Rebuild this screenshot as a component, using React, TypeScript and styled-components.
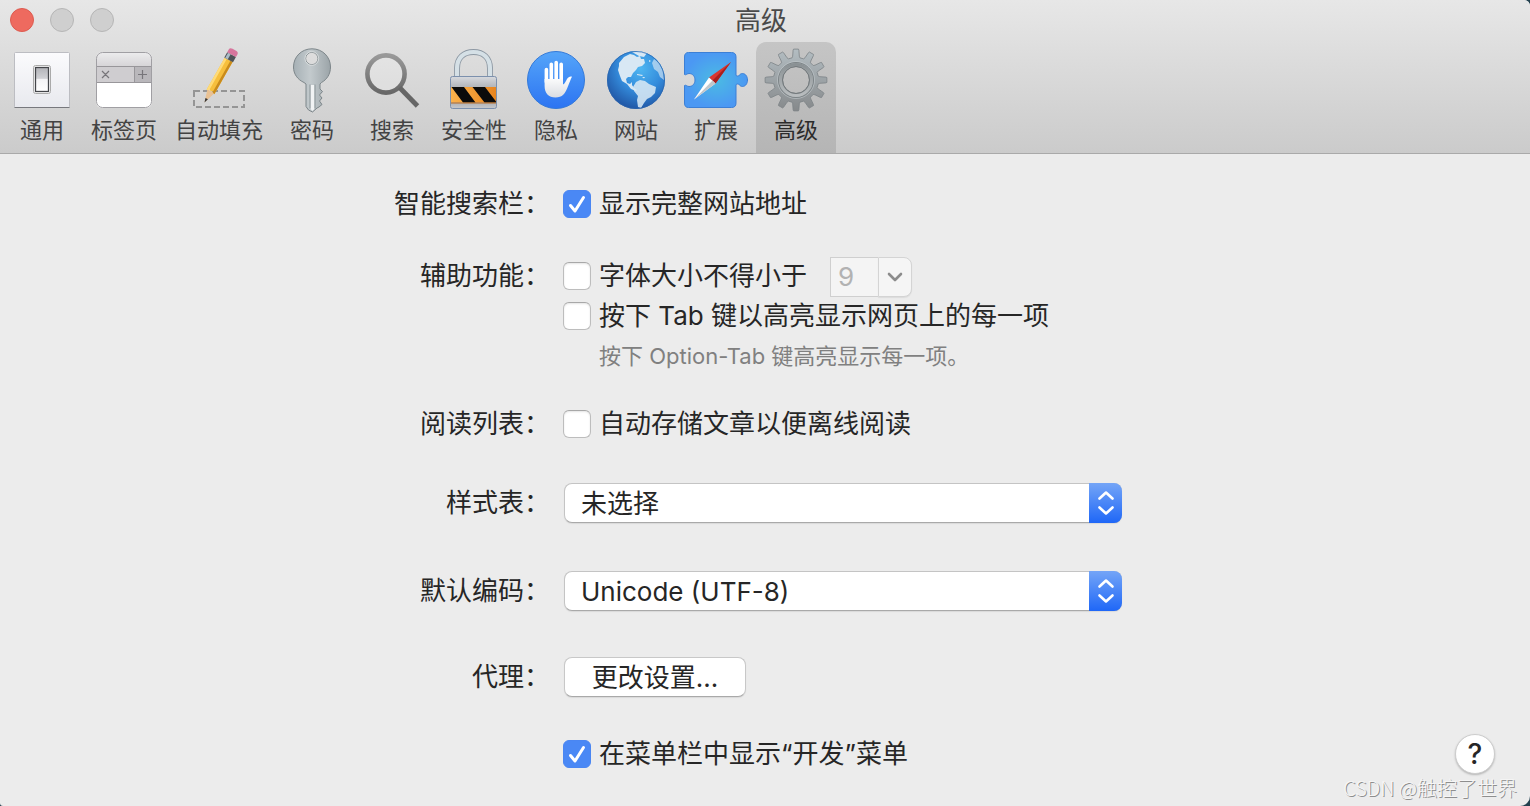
import React from "react";
import styled, { createGlobalStyle } from "styled-components";

const GlobalStyle = createGlobalStyle`
  *, *::before, *::after { box-sizing: border-box; }
  body {
    margin: 0;
    background: #23414f;
    font-family: Inter, "Noto Sans CJK SC", sans-serif;
    font-size: 26px;
    line-height: 40px;
    color: #262626;
  }
  button, input, select { font: inherit; color: inherit; margin: 0; }
`;

const Window = styled.div`
  position: relative;
  display: flex;
  flex-direction: column;
  min-height: 100vh;
  background: #ececec;
  border-radius: 0 6px 10px 3px;
  overflow: hidden;
`;

const Header = styled.header`
  background: linear-gradient(#e7e7e7, #cbcbcb);
  border-bottom: 1px solid #a9a9a9;
`;

const TitleBar = styled.div`
  display: grid;
  grid-template-columns: 124px 1fr 132px;
  align-items: center;
  height: 42px;
`;

const Lights = styled.div`
  display: flex;
  gap: 16px;
  padding: 0 0 2px 10px;
`;

const Light = styled.button<{ $close?: boolean }>`
  width: 24px;
  height: 24px;
  padding: 0;
  border-radius: 50%;
  border: 1px solid ${(p) => (p.$close ? "#dd5b50" : "#b6b6b6")};
  background: ${(p) => (p.$close ? "#ee6a5f" : "#cfcfcf")};
`;

const Title = styled.h1`
  margin: 0;
  font-size: 26px;
  font-weight: 400;
  line-height: 42px;
  text-align: center;
  color: #4a4a4a;
`;

const Toolbar = styled.nav`
  display: flex;
  padding-left: 2px;
`;

const Tab = styled.button<{ $active?: boolean }>`
  display: flex;
  flex-direction: column;
  align-items: center;
  min-width: 80px;
  height: 111px;
  padding: 6px 9px 0;
  border: 0;
  border-radius: 10px 10px 0 0;
  background: ${(p) => (p.$active ? "linear-gradient(#c5c5c5, #b5b5b5)" : "none")};
  color: ${(p) => (p.$active ? "#2b2b2b" : "#434343")};
  font-size: 22px;
  line-height: 32px;
  white-space: nowrap;

  svg { display: block; margin: 0 -4px 2px; overflow: visible; }
`;

const Main = styled.main`
  display: grid;
  grid-template-columns: 61px 1fr 75px;
  padding: 30px 0 32px;
`;

const Form = styled.form`
  grid-column: 2;
  display: grid;
  grid-template-columns: auto 559px;
  column-gap: 13px;
  justify-content: center;
`;

const Label = styled.div<{ $space?: number }>`
  grid-column: 1;
  margin-top: ${(p) => p.$space ?? 0}px;
  text-align: right;
  white-space: nowrap;
`;

const Field = styled.div<{ $space?: number }>`
  grid-column: 2;
  margin-top: ${(p) => p.$space ?? 0}px;
`;

const Line = styled.div`
  display: flex;
  align-items: center;
  height: 40px;
`;

const CheckLabel = styled.label`
  display: flex;
  align-items: center;
  gap: 8px;
  white-space: nowrap;
`;

const CheckBoxFrame = styled.span`
  display: grid;
  width: 28px;
  height: 28px;

  > * { grid-area: 1 / 1; }
  > svg { pointer-events: none; visibility: hidden; }
  > input:checked + svg { visibility: visible; }
`;

const CheckInput = styled.input`
  appearance: none;
  width: 28px;
  height: 28px;
  border: 1px solid #bdbdbd;
  border-top-color: #a8a8a8;
  border-radius: 6px;
  background: #fff;
  box-shadow: inset 0 1px 2px #e4e4e4;

  &:checked {
    border-color: #4a86f2;
    background: #4a88f5;
    box-shadow: none;
  }
`;

const Hint = styled.p`
  margin: 0;
  padding-left: 36px;
  font-size: 22px;
  line-height: 40px;
  color: #808080;
`;

const Combo = styled.div`
  display: flex;
  height: 40px;
  margin: 2px 0 0 23px;
`;

const ComboInput = styled.input`
  width: 48px;
  padding: 0 0 0 7px;
  border: 1px solid #cfcfcf;
  border-right: 0;
  background: #f4f4f4;
  color: #b2b2b2;
`;

const ComboButton = styled.button`
  display: flex;
  align-items: center;
  justify-content: center;
  width: 34px;
  padding: 0;
  border: 1px solid #d4d4d4;
  border-radius: 0 8px 8px 0;
  background: #f5f5f5;
  box-shadow: 0 1px 1px #dcdcdc;
`;

const SelectFrame = styled.div`
  display: grid;
  height: 40px;
  margin-left: 1px;

  > * { grid-area: 1 / 1; }
`;

const Select = styled.select`
  appearance: none;
  width: 100%;
  height: 40px;
  padding: 0 44px 2px 16px;
  border: 1px solid #c4c4c4;
  border-bottom-color: #a9a9a9;
  border-radius: 8px;
  background: #fff;
  box-shadow: 0 1px 1px #dadada;
`;

const SelectCap = styled.span`
  display: flex;
  align-items: center;
  justify-content: center;
  justify-self: end;
  width: 33px;
  height: 40px;
  border-radius: 0 8px 8px 0;
  background: linear-gradient(#74a5f7, #1f67f7);
  pointer-events: none;
`;

const PushButton = styled.button`
  display: block;
  width: 182px;
  height: 40px;
  margin-left: 1px;
  padding: 0 0 2px;
  border: 1px solid #c8c8c8;
  border-bottom-color: #a9a9a9;
  border-radius: 8px;
  background: #fff;
  box-shadow: 0 1px 1px #dadada;
`;

const HelpButton = styled.button`
  grid-column: 3;
  align-self: end;
  width: 40px;
  height: 40px;
  padding: 0;
  border: 1px solid #cdcdcd;
  border-radius: 50%;
  background: #fff;
  box-shadow: 0 1px 2px #b5b5b5;
  font-size: 28px;
  font-weight: 500;
  line-height: 36px;
`;

const Watermark = styled.div`
  position: absolute;
  right: 13px;
  bottom: 4px;
  font-family: "Noto Sans CJK SC", sans-serif;
  font-size: 20px;
  font-weight: 300;
  line-height: 28px;
  color: #f6f6f6;
  text-shadow: 1px 1px 0 #8e8e8e;
`;

const GeneralIcon = () => (
  <svg width="64" height="64" viewBox="0 0 64 64" aria-hidden="true">
    <defs>
      <linearGradient id="plate" x2="0" y2="1"><stop stopColor="#fbfbfd" /><stop offset="1" stopColor="#e8e9ee" /></linearGradient>
      <linearGradient id="rocker" x2="0" y2="1"><stop stopColor="#b2b3b8" /><stop offset=".45" stopColor="#d0d1d5" /><stop offset=".5" stopColor="#f4f4f6" /><stop offset="1" stopColor="#fff" /></linearGradient>
    </defs>
    <rect x="4.500" y="4.500" width="55" height="55" rx="1" fill="url(#plate)" stroke="#bcbdc2" />
    <path d="M4.500 59.500h55" stroke="#77787d" />
    <rect x="23.500" y="17.500" width="17" height="28" rx="2" fill="#fff" stroke="#aaa" />
    <rect x="25.500" y="19.500" width="13" height="24" fill="url(#rocker)" stroke="#44464a" strokeWidth="1.300" />
  </svg>
);

const TabsIcon = () => (
  <svg width="64" height="64" viewBox="0 0 64 64" aria-hidden="true">
    <defs>
      <linearGradient id="tabTop" x2="0" y2="1"><stop stopColor="#ededee" /><stop offset="1" stopColor="#d5d3d6" /></linearGradient>
      <clipPath id="tabClip"><rect x="4" y="4" width="56" height="56" rx="6" /></clipPath>
    </defs>
    <g clipPath="url(#tabClip)">
      <path fill="#fff" d="M4 4h56v56H4z" />
      <path fill="url(#tabTop)" d="M4 4h56v15H4z" />
      <path fill="#cfcdd0" d="M4 18h56v17H4z" />
      <path fill="#b9b7bb" d="M42 18h18v17H42z" />
      <path d="M4 18.500h56M4 34.500h56M42.500 18v17" stroke="#98969a" />
    </g>
    <rect x="4.500" y="4.500" width="55" height="55" rx="6" fill="none" stroke="#a09fa3" />
    <path d="M10 23l7 7m0-7l-7 7M46 26.500h9M50.500 22v9" stroke="#77757a" strokeWidth="1.200" fill="none" />
  </svg>
);

const PencilIcon = () => (
  <svg width="64" height="64" viewBox="0 0 64 64" aria-hidden="true">
    <path d="M7 43h50v16H7z" fill="none" stroke="#959595" strokeWidth="2" strokeDasharray="6 3" />
    <g transform="translate(17.500 54.500) rotate(29.500)">
      <path d="M0 0L-4-13h8z" fill="#e9c193" />
      <path d="M0 0l-1.400-4.500h2.800z" fill="#333" />
      <path d="M-4.500-12l2-2 2.500 1 2.500-1 2 2V-49h-9z" fill="#f6bf3d" />
      <path d="M-4.500-12V-49h2.500v36z" fill="#ffdb78" />
      <path d="M4.500-12V-49H2v36z" fill="#c98b1c" />
      <path d="M-5-55H5v6H-5z" fill="#4e5358" />
      <path d="M-4-55h3v6h-3z" fill="#a9bcc7" />
      <path d="M-5-55v-3q0-2.500 3-2.500h4q3 0 3 2.500v3z" fill="#d7759d" />
    </g>
  </svg>
);

const KeyIcon = () => (
  <svg width="64" height="64" viewBox="0 0 64 64" aria-hidden="true">
    <defs><linearGradient id="keyMetal"><stop stopColor="#a6b0b5" /><stop offset=".45" stopColor="#c3cacd" /><stop offset="1" stopColor="#9ba4a8" /></linearGradient></defs>
    <path fillRule="evenodd" d="M32 .800c10.500 0 18.500 8 18.500 18.200 0 7-3.500 12.500-9 15.500l-1.500 1.500V41l2.500 2.500-3 3.500 2.500 3-2.500 3 2.500 3.500-3 2.500-2 1-4.500 4-4-2-2.500-3.500V36l-2-1.500C17.500 31.500 13.500 26 13.500 19 13.500 8.800 21.500.800 32 .800zM38 10.500a6.200 6.200 0 1 0-12.400 0 6.200 6.200 0 0 0 12.400 0z" fill="url(#keyMetal)" stroke="#7d868a" />
    <circle cx="31.800" cy="10.500" r="6.800" fill="none" stroke="#e4e8e9" strokeWidth=".8" />
    <path d="M30.500 37h4V61l-2 2-2-2z" fill="#f1f3f4" />
    <path d="M30 36.500v24" stroke="#8b9498" />
    <path d="M35 36.500v24" stroke="#8b9498" />
  </svg>
);

const SearchIcon = () => (
  <svg width="64" height="64" viewBox="0 0 64 64" aria-hidden="true">
    <defs><linearGradient id="lens" x2="0" y2="1"><stop stopColor="#999" /><stop offset="1" stopColor="#686868" /></linearGradient></defs>
    <circle cx="26" cy="26" r="18.600" fill="#fff" fillOpacity=".2" stroke="url(#lens)" strokeWidth="4.600" />
    <path d="M39.500 39.500L57.500 58" stroke="#666" strokeWidth="4.800" />
  </svg>
);

const LockIcon = () => (
  <svg width="64" height="64" viewBox="0 0 64 64" aria-hidden="true">
    <defs>
      <linearGradient id="lockBody" x2="0" y2="1"><stop stopColor="#d8dade" /><stop offset=".3" stopColor="#b5b8bd" /><stop offset=".75" stopColor="#a6a9ae" /><stop offset="1" stopColor="#c6c8cc" /></linearGradient>
      <linearGradient id="amber"><stop stopColor="#fbb24c" /><stop offset="1" stopColor="#e8851f" /></linearGradient>
    </defs>
    <path d="M15 29V20.500C15 10 21.500 4 31.500 4S48 10 48 20.500V29" fill="none" stroke="#8d98a3" strokeWidth="6" />
    <path d="M15 29V20.500C15 10 21.500 4 31.500 4S48 10 48 20.500V29" fill="none" stroke="#d5e0e6" strokeWidth="4.200" />
    <rect x="8.500" y="28.500" width="46" height="32" rx="2" fill="url(#lockBody)" stroke="#7c90ad" />
    <path d="M9 39h45v15.500H9z" fill="url(#amber)" />
    <path d="M9.500 39H22l11.500 15.500H21zM30.500 39H43l11 14.500v1H42.500z" fill="#0b0b0b" />
    <path d="M9 55h45" stroke="#b96b22" />
  </svg>
);

const HandIcon = () => (
  <svg width="64" height="64" viewBox="0 0 64 64" aria-hidden="true">
    <defs>
      <linearGradient id="privacy" x2="0" y2="1"><stop stopColor="#55a5f9" /><stop offset="1" stopColor="#2c74f2" /></linearGradient>
      <linearGradient id="palm" x2="0" y2="1"><stop stopColor="#fff" /><stop offset="1" stopColor="#dadde2" /></linearGradient>
    </defs>
    <circle cx="32" cy="32" r="28.500" fill="url(#privacy)" stroke="#347ad9" />
    <path d="M22.400 21.500V34M27.300 16.200V34M32.200 14.500V34M37.200 16.200V34" stroke="#fff" strokeWidth="3.600" strokeLinecap="round" />
    <path d="M20.600 31H39v5.500c1.800-.5 2.800-3.500 4-5.500 1.300-2.200 3.500-3 5-2.200-1.200 2-2.500 6-4 9.500C41 46 38.500 49.500 31.500 49.500c-7 0-10.900-4.500-10.900-11.500z" fill="url(#palm)" />
  </svg>
);

const GlobeIcon = () => (
  <svg width="64" height="64" viewBox="0 0 64 64" aria-hidden="true">
    <defs>
      <radialGradient id="ocean" cx=".58" cy=".3" r=".75"><stop stopColor="#4fb6f1" /><stop offset=".5" stopColor="#348cdc" /><stop offset="1" stopColor="#1e509f" /></radialGradient>
      <clipPath id="globeClip"><circle cx="32" cy="32" r="29" /></clipPath>
    </defs>
    <circle cx="32" cy="32" r="29" fill="url(#ocean)" />
    <g clipPath="url(#globeClip)" fill="#d8e8f4">
      <path d="M15 15l5-6 6-3 4 1 3 2 3-1 1 3 3 0 1 4-3 3-4 1-2 3-3 3-2 4-3 0-2 2 1 4 3 1 2-2v3l2 3 3 2-1 1-5-2-4-5-5-3-2-5-2-6 1-4z" />
      <path d="M28 4l8-1 7 2-3 4-5-1zM33 26l6 1-1 1-5-1zM38 29l3 0-1 1.500zM45 12l2 1-2 1z" />
      <path d="M32 34l4-2 5 1 4 3 7 3-1 6-4 4-4 2-3 4-3 5-3-1-1-7 1-4-4-5-1-4z" opacity=".88" />
      <path d="M50 11l5 4 4 8 1 9-4-3-2-5-4-3-2-6z" opacity=".65" />
    </g>
    <circle cx="32" cy="32" r="28.500" fill="none" stroke="#2b65ad" strokeOpacity=".7" />
  </svg>
);

const ExtensionIcon = () => (
  <svg width="64" height="64" viewBox="0 0 64 64" aria-hidden="true">
    <defs><radialGradient id="puzzle"><stop stopColor="#4bbbe3" /><stop offset="1" stopColor="#4b98f3" /></radialGradient></defs>
    <path d="M4.500 4.500h43q4.500 0 4.500 4.500v18q0 1 1.500 1h1c1.500-1.800 2.500-2.500 4-2.500 2.800 0 5 2.800 5 6.500s-2.200 6.500-5 6.500c-1.500 0-2.500-.7-4-2.500h-1q-1.500 0-1.500 1V55q0 4.500-4.500 4.500h-43Q.500 59.500.500 55V37.500c1.500-1 2.500 1 4.500 1 3.600 0 6-2.800 6-6.500s-2.400-6.500-6-6.500c-2 0-3 2-4.500 1V9q0-4.500 4-4.500z" fill="url(#puzzle)" stroke="#3c7fd5" />
    <path d="M47 14L25 29.500l6.500 6z" fill="#d93630" />
    <path d="M47 14L28.500 32.500l3 3z" fill="#a91f1d" />
    <path d="M10 51.500l15-22 6.500 6z" fill="#fff" />
    <path d="M10 51.500l18.500-19 3 3z" fill="#c2c7cb" />
  </svg>
);

const GearIcon = () => (
  <svg width="64" height="64" viewBox="0 0 64 64" aria-hidden="true">
    <defs>
      <linearGradient id="steel" gradientUnits="userSpaceOnUse" x1="0" y1="0" x2="0" y2="64"><stop stopColor="#b4bec3" /><stop offset="1" stopColor="#85888a" /></linearGradient>
      <linearGradient id="rim" x2="0" y2="1"><stop stopColor="#8a9194" /><stop offset="1" stopColor="#b9bdbf" /></linearGradient>
      <path
        id="teeth"
        d={Array.from({ length: 12 }, (_, i) => {
          const at = (r: number, deg: number) => {
            const a = ((i * 30 + deg - 90) * Math.PI) / 180;
            return `${(32 + r * Math.cos(a)).toFixed(2)} ${(32 + r * Math.sin(a)).toFixed(2)}`;
          };
          return `${i ? "L" : "M"}${at(22.5, -10)}L${at(24, -8)}L${at(30, -5.5)}L${at(31, -4.5)}L${at(31, 4.5)}L${at(30, 5.5)}L${at(24, 8)}L${at(22.5, 10)}`;
        }).join("") + "ZM45.500 32a13.500 13.500 0 1 0-27 0 13.500 13.500 0 0 0 27 0z"}
      />
    </defs>
    <use href="#teeth" fill="url(#steel)" fillRule="evenodd" stroke="#7c8386" strokeWidth=".8" />
    <circle cx="32" cy="32" r="18.500" fill="none" stroke="#c3cacd" strokeOpacity=".6" />
    <circle cx="32" cy="32" r="17.500" fill="none" stroke="#7d8487" />
    <circle cx="32" cy="32" r="15.500" fill="none" stroke="url(#rim)" strokeWidth="3" />
    <circle cx="32" cy="32" r="13.500" fill="none" stroke="#747a7d" />
  </svg>
);

const tabs = [
  { name: "通用", Icon: GeneralIcon },
  { name: "标签页", Icon: TabsIcon },
  { name: "自动填充", Icon: PencilIcon },
  { name: "密码", Icon: KeyIcon },
  { name: "搜索", Icon: SearchIcon },
  { name: "安全性", Icon: LockIcon },
  { name: "隐私", Icon: HandIcon },
  { name: "网站", Icon: GlobeIcon },
  { name: "扩展", Icon: ExtensionIcon },
  { name: "高级", Icon: GearIcon },
];

function CheckBox({ checked, children }: { checked?: boolean; children: React.ReactNode }) {
  return (
    <CheckLabel>
      <CheckBoxFrame>
        <CheckInput type="checkbox" defaultChecked={checked} />
        <svg width="28" height="28" viewBox="0 0 28 28" aria-hidden="true">
          <path d="M7.500 15.500l4.500 5.500L20.500 7.500" fill="none" stroke="#fff" strokeWidth="3" strokeLinecap="round" strokeLinejoin="round" />
        </svg>
      </CheckBoxFrame>
      {children}
    </CheckLabel>
  );
}

function PopUp({ id, value }: { id: string; value: string }) {
  return (
    <SelectFrame>
      <Select id={id} defaultValue={value}>
        <option>{value}</option>
      </Select>
      <SelectCap>
        <svg width="18" height="28" viewBox="0 0 18 28" aria-hidden="true">
          <path d="M2.500 9.500L9 3.500l6.500 6M2.500 18.500L9 24.500l6.500-6" fill="none" stroke="#fff" strokeWidth="2.600" strokeLinecap="round" strokeLinejoin="round" />
        </svg>
      </SelectCap>
    </SelectFrame>
  );
}

export default function App() {
  return (
    <>
      <GlobalStyle />
      <Window lang="zh-CN">
        <Header>
          <TitleBar>
            <Lights>
              <Light $close type="button" aria-label="关闭" />
              <Light type="button" aria-label="最小化" />
              <Light type="button" aria-label="缩放" />
            </Lights>
            <Title>高级</Title>
          </TitleBar>
          <Toolbar>
            {tabs.map(({ name, Icon }) => (
              <Tab key={name} type="button" $active={name === "高级"}>
                <Icon />
                {name}
              </Tab>
            ))}
          </Toolbar>
        </Header>
        <Main>
          <Form>
            <Label>智能搜索栏：</Label>
            <Field>
              <Line><CheckBox checked>显示完整网站地址</CheckBox></Line>
            </Field>

            <Label $space={32}>辅助功能：</Label>
            <Field $space={32}>
              <Line>
                <CheckBox>字体大小不得小于</CheckBox>
                <Combo>
                  <ComboInput aria-label="最小字体大小" defaultValue="9" disabled />
                  <ComboButton type="button" aria-label="选择字体大小" disabled>
                    <svg width="18" height="12" viewBox="0 0 18 12" aria-hidden="true">
                      <path d="M3 3l6 6 6-6" fill="none" stroke="#8c8c8c" strokeWidth="2.600" strokeLinecap="round" strokeLinejoin="round" />
                    </svg>
                  </ComboButton>
                </Combo>
              </Line>
              <Line><CheckBox>按下 Tab 键以高亮显示网页上的每一项</CheckBox></Line>
              <Hint>按下 Option-Tab 键高亮显示每一项。</Hint>
            </Field>

            <Label $space={28}>阅读列表：</Label>
            <Field $space={28}>
              <Line><CheckBox>自动存储文章以便离线阅读</CheckBox></Line>
            </Field>

            <Label as="label" htmlFor="stylesheet" $space={39}>样式表：</Label>
            <Field $space={39}><PopUp id="stylesheet" value="未选择" /></Field>

            <Label as="label" htmlFor="encoding" $space={48}>默认编码：</Label>
            <Field $space={48}><PopUp id="encoding" value="Unicode (UTF-8)" /></Field>

            <Label $space={46}>代理：</Label>
            <Field $space={46}><PushButton type="button">更改设置...</PushButton></Field>

            <Field $space={37}>
              <Line><CheckBox checked>在菜单栏中显示“开发”菜单</CheckBox></Line>
            </Field>
          </Form>
          <HelpButton type="button" aria-label="帮助">?</HelpButton>
        </Main>
        <Watermark>CSDN @触控了世界</Watermark>
      </Window>
    </>
  );
}
